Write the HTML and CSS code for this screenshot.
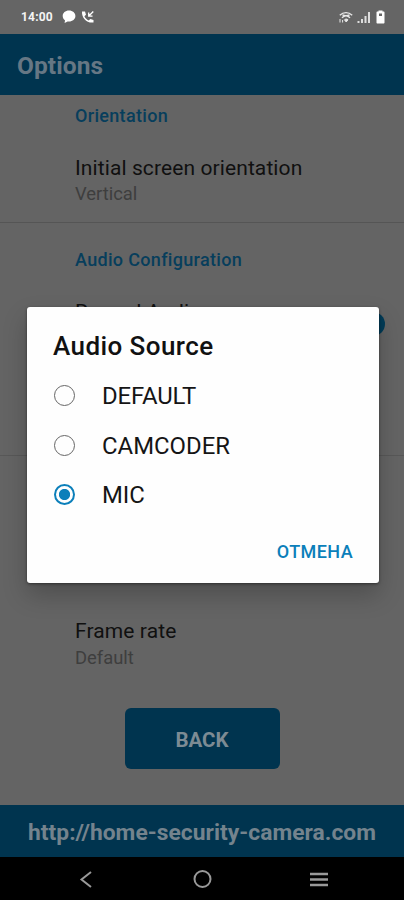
FILE: index.html
```
<!DOCTYPE html>
<html lang="en">
<head>
<meta charset="utf-8">
<title>Options</title>
<link rel="stylesheet" href="styles.css">
</head>
<body>
<div class="phone">
  <div class="status">
    <span class="time">14:00</span>
    <svg class="chat" width="14" height="14" viewBox="0 0 14 14"><path d="M7 .5C3.300.5.7 2.900.7 6c0 1.900.9 3.400 2.300 4.300L2.600 13l3-1.600c4.400.6 7.800-1.900 7.800-5.400C13.400 2.900 10.700.5 7 .5z" fill="#fff"/></svg>
    <svg class="call" width="14" height="14" viewBox="0 0 14 14"><path d="M1 1.500h3l1 3.200-1.600 1.500c1 2 2.300 3.400 4.300 4.400l1.600-1.600 3.200 1v2.500C6 13.500.5 8 1 1.500z" fill="#fff"/><path d="M12.300 1.500 7.800 6M7.700 2.500v3.700h3.800" fill="none" stroke="#fff" stroke-width="1.300"/></svg>
    <span class="spacer"></span>
    <svg class="wifi" width="14" height="13" viewBox="0 0 14 13"><path d="M.8 4.200C4.500.8 9.500.8 13.200 4.200M3 6.800c2.500-2.600 5.500-2.600 8 0M3.500 3.900c2.500 1.300 4.500 1.300 7 0" fill="none" stroke="#e8e8e8" stroke-width="1.400"/><path d="M5.500 8.800c1.200-1 2.400-1 3.500 0l-1.800 2.200zM1 8v3.500M3.600 9v2.500" fill="#e8e8e8" stroke="#e8e8e8"/></svg>
    <svg class="signal" width="14" height="13" viewBox="0 0 14 13"><path d="M1.500 10v2M5 8v4M8.500 5v7M12 1v11" stroke="#ddd" stroke-width="2" fill="none"/></svg>
    <svg class="battery" width="9" height="14" viewBox="0 0 9 14"><path d="M2.500 .5h4v1h1c.6 0 1 .4 1 1v10c0 .6-.4 1-1 1h-6c-.6 0-1-.4-1-1v-10c0-.6.4-1 1-1h1z" fill="#fff"/><path d="M3 3.500h3V6H3z" fill="#656565"/></svg>
  </div>
  <header class="bar"><h1 class="title">Options</h1></header>
  <main class="content">
    <section class="group orientation">
      <h2 class="heading">Orientation</h2>
      <div class="name">Initial screen orientation</div>
      <div class="value">Vertical</div>
    </section>
    <section class="group audio">
      <h2 class="heading">Audio Configuration</h2>
      <div class="name record"><span>Record Audio</span><span class="knob"></span></div>
    </section>
    <section class="group video">
      <div class="name">Frame rate</div>
      <div class="value">Default</div>
    </section>
    <button class="back">BACK</button>
  </main>
  <footer class="link">http://home-security-camera.com</footer>
  <nav class="nav">
    <svg width="14" height="18" viewBox="0 0 14 18"><path d="M12 1 2.500 8.500 12 16" fill="none" stroke="#999" stroke-width="2"/></svg>
    <svg width="20" height="20" viewBox="0 0 20 20"><circle cx="10.500" cy="9" r="8" fill="none" stroke="#999" stroke-width="2"/></svg>
    <svg width="18" height="16" viewBox="0 0 18 16"><path d="M0 2h18M0 7.500h18M0 13h18" stroke="#999" stroke-width="2.300"/></svg>
  </nav>
  <div class="dialog" role="dialog">
    <h2 class="dialog-title">Audio Source</h2>
    <div class="option"><span class="radio"></span><span class="label-default">DEFAULT</span></div>
    <div class="option"><span class="radio"></span><span>CAMCODER</span></div>
    <div class="option"><span class="radio checked"></span><span>MIC</span></div>
    <div class="actions">ОТМЕНА</div>
  </div>
</div>
</body>
</html>
```
FILE: styles.css
```
* { box-sizing: border-box; margin: 0; padding: 0; }
body { width: 404px; height: 900px; overflow: hidden; font-family: Roboto, "Liberation Sans", sans-serif; background: #646464; }
.phone { position: relative; display: flex; flex-direction: column; height: 900px; }
.status { display: flex; align-items: center; height: 34px; padding: 0 19px 0 21px; background: #656565; }
.time { width: 41px; font-size: 12px; font-weight: 700; line-height: 34px; color: #f4f4f4; letter-spacing: .2px; }
.call { margin-left: 5px; }
.spacer { flex: 1; }
.signal { margin-left: 4px; }
.battery { margin-left: 5px; }
.bar { display: flex; align-items: center; height: 61px; padding: 2px 17px 0; background: #00344f; }
.title { font-size: 24.500px; font-weight: 700; line-height: 30px; letter-spacing: .1px; color: #667784; }
.content { height: 710px; background: #646464; }
.group { padding-left: 75px; }
.heading { font-size: 18px; font-weight: 500; line-height: 24px; letter-spacing: .32px; color: #073e5c; }
.name { font-size: 21px; line-height: 28px; letter-spacing: .1px; color: #101010; white-space: nowrap; }
.value { font-size: 18.400px; line-height: 25px; color: #3e3e3e; }
.orientation { height: 128px; padding-top: 9px; border-bottom: 1px solid #555; }
.orientation .name { margin-top: 26px; }
.orientation .value { line-height: 24px; }
.audio { height: 233px; padding-top: 25px; border-bottom: 1px solid #585858; }
.record { display: flex; justify-content: space-between; align-items: flex-start; margin-top: 26px; padding-right: 19px; }
.knob { width: 24px; height: 24px; margin-top: 14px; border-radius: 50%; background: #003b57; }
.video { height: 252px; padding-top: 161px; }
.back { display: block; width: 155px; height: 61px; margin: 0 auto; padding-top: 3px; border: 0; border-radius: 6px; background: #00344f; color: #7c8b94; font: 700 20.500px/58px Roboto, sans-serif; }
.link { display: flex; align-items: center; justify-content: center; height: 52px; background: #00344f; color: #74838d; font-size: 22.800px; font-weight: 700; letter-spacing: .03px; padding-top: 2px; }
.nav { display: flex; align-items: center; justify-content: space-between; height: 43px; padding: 2px 76px 0 79px; background: #000; }
.dialog { position: absolute; left: 27px; top: 307px; width: 352px; height: 276px; padding: 23px 26px 0 26px; border-radius: 3px; background: #fefefe; box-shadow: 0 1px 3px rgba(0,0,0,.45), 0 12px 24px rgba(0,0,0,.22); }
.dialog-title { height: 41px; font-size: 26px; font-weight: 500; line-height: 32px; letter-spacing: .42px; color: #111; }
.option { display: flex; align-items: center; gap: 27px; height: 49.500px; font-size: 23.900px; line-height: 30px; color: #151515; padding-left: 1px; }
.option span:last-child { padding-top: 1px; }
.label-default { letter-spacing: -.15px; }
.radio { width: 21px; height: 21px; border: 1.800px solid #666; border-radius: 50%; }
.checked { border: 2px solid #0b7fba; background: radial-gradient(circle, #0b7fba 5.200px, #fefefe 6px); }
.actions { display: flex; justify-content: flex-end; height: 36px; margin-top: 14px; font-size: 18px; font-weight: 500; line-height: 36px; letter-spacing: .42px; color: #0b7fba; }
```
